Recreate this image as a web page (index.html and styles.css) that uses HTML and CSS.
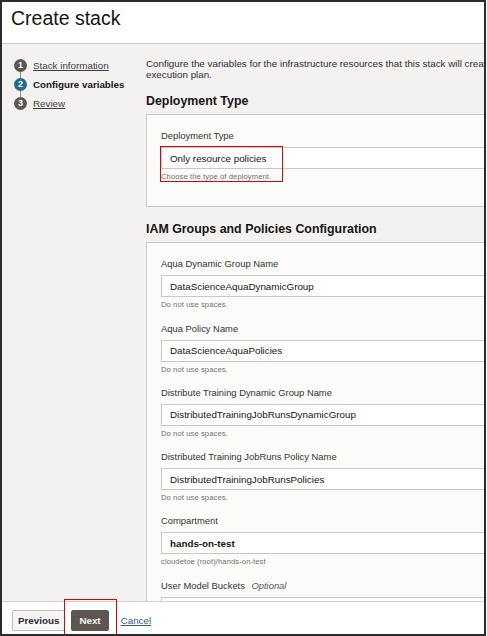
FILE: index.html
```html
<html>

<head>
  <link rel="stylesheet" href="styles.css">
</head>

<body>

  <div class="frame">
    <header class="header">
      <h1 class="title">Create stack</h1>
    </header>

    <div class="content">
      <nav class="steps">
        <ol class="step-list">
          <li class="step"><span class="step-num">1</span><a class="step-link" href="#">Stack information</a></li>
          <li class="step step-current"><span class="step-num">2</span><span class="step-label">Configure variables</span></li>
          <li class="step"><span class="step-num">3</span><a class="step-link" href="#">Review</a></li>
        </ol>
      </nav>

      <main class="main">
        <p class="intro">Configure the variables for the infrastructure resources that this stack will create when you run the apply job for this<br>execution plan.</p>

        <h2 class="section-title">Deployment Type</h2>
        <div class="panel">
          <div class="field">
            <label class="field-label">Deployment Type</label>
            <div class="field-body">
              <input class="input" value="Only resource policies" readonly>
              <p class="help">Choose the type of deployment.</p>
              <span class="highlight highlight-select"></span>
            </div>
          </div>
        </div>

        <h2 class="section-title section-title-second">IAM Groups and Policies Configuration</h2>
        <div class="panel">
          <div class="field">
            <label class="field-label">Aqua Dynamic Group Name</label>
            <input class="input" value="DataScienceAquaDynamicGroup" readonly>
            <p class="help">Do not use spaces.</p>
          </div>
          <div class="field">
            <label class="field-label">Aqua Policy Name</label>
            <input class="input" value="DataScienceAquaPolicies" readonly>
            <p class="help">Do not use spaces.</p>
          </div>
          <div class="field">
            <label class="field-label">Distribute Training Dynamic Group Name</label>
            <input class="input" value="DistributedTrainingJobRunsDynamicGroup" readonly>
            <p class="help">Do not use spaces.</p>
          </div>
          <div class="field">
            <label class="field-label">Distributed Training JobRuns Policy Name</label>
            <input class="input" value="DistributedTrainingJobRunsPolicies" readonly>
            <p class="help">Do not use spaces.</p>
          </div>
          <div class="field">
            <label class="field-label">Compartment</label>
            <input class="input input-bold" value="hands-on-test" readonly>
            <p class="help">cloudetoe (root)/hands-on-test</p>
          </div>
          <div class="field">
            <label class="field-label">User Model Buckets <i class="optional">Optional</i></label>
            <input class="input" value="" readonly>
            <p class="help">&nbsp;</p>
          </div>
        </div>
      </main>
    </div>

    <footer class="footer">
      <button class="btn btn-secondary">Previous</button>
      <button class="btn btn-primary">Next</button>
      <a class="cancel" href="#">Cancel</a>
      <span class="highlight highlight-next"></span>
    </footer>
  </div>

</body>

</html>
```

FILE: styles.css
```css
body {
  margin: 0;
  font-family: "Liberation Sans", Arial, sans-serif;
  color: #161513;
  background-color: #fff;
}

.frame {
  width: 486px;
  height: 636px;
  box-sizing: border-box;
  border: 2px solid #2b2b2b;
  display: flex;
  flex-direction: column;
  overflow: hidden;
}

/* header */
.header {
  flex: 0 0 auto;
  height: 36px;
  background-color: #fff;
  border-bottom: 1px solid #c9c9c9;
  padding: 5px 9px 0;
}

.title {
  margin: 0;
  font-size: 19.5px;
  line-height: 22px;
  font-weight: normal;
  color: #161513;
}

.content {
  flex: 1 1 auto;
  display: flex;
  background-color: #f3f2f1;
  overflow: hidden;
}

/* steps */
.steps {
  flex: 0 0 144px;
  padding: 11.5px 0 0 12px;
  box-sizing: border-box;
}

.step-list {
  list-style: none;
  margin: 0;
  padding: 0;
  position: relative;
}

.step-list::before {
  content: "";
  position: absolute;
  left: 6px;
  top: 9px;
  bottom: 9px;
  width: 1px;
  background-color: #8c8884;
}

.step {
  display: flex;
  align-items: center;
  height: 19px;
  font-size: 9.8px;
}

.step-num {
  position: relative;
  width: 13px;
  height: 13px;
  border-radius: 50%;
  background-color: #5b5651;
  color: #fff;
  font-size: 9px;
  font-weight: bold;
  line-height: 13px;
  text-align: center;
  margin-right: 6px;
}

.step-current .step-num {
  background-color: #236a8d;
}

.step-link {
  color: #3d3d3d;
  text-decoration: underline;
}

.step-label {
  font-weight: bold;
  color: #161513;
}

/* main column */
.main {
  flex: 0 0 600px;
  padding-top: 14px;
}

.intro {
  margin: 0;
  font-size: 9.8px;
  line-height: 11px;
  color: #2e2e2e;
}

.section-title {
  margin: 14px 0 5px;
  font-size: 12.4px;
  line-height: 15px;
  font-weight: bold;
  color: #161513;
}

.section-title-second {
  margin-top: 15px;
}

.panel {
  background-color: #fbfbfa;
  border: 1px solid #c9c9c9;
  padding: 15px 0 12px 14px;
}

.field {
  margin-bottom: 13.3px;
}

.field-body {
  position: relative;
}

.field-label {
  display: block;
  font-size: 9.4px;
  line-height: 11px;
  margin-bottom: 6px;
  color: #333;
}

.optional {
  color: #555;
  margin-left: 4px;
}

.input {
  display: block;
  width: 100%;
  height: 22px;
  box-sizing: border-box;
  border: 1px solid #c8c8c8;
  background-color: #fff;
  padding: 0 8px;
  font-family: inherit;
  font-size: 9.8px;
  color: #161513;
  outline: none;
}

.input-bold {
  font-weight: bold;
}

.help {
  margin: 3px 0 0;
  font-size: 7.6px;
  line-height: 9px;
  letter-spacing: 0.1px;
  color: #707070;
}

/* footer */
.footer {
  flex: 0 0 auto;
  height: 21px;
  position: relative;
  display: flex;
  align-items: center;
  background-color: #fff;
  border-top: 1px solid #d2d2d2;
  padding: 8px 10px 3px;
}

.btn {
  height: 21px;
  border-radius: 2px;
  font-family: inherit;
  font-size: 9.8px;
  font-weight: bold;
  cursor: pointer;
}

.btn-secondary {
  padding: 0 5px;
  background-color: #f6f5f3;
  border: 1px solid #bdbdbd;
  color: #2c2c2c;
  margin-right: 6px;
}

.btn-primary {
  padding: 0 7px;
  background-color: #5c5550;
  border: 1px solid #5c5550;
  color: #f5f5f5;
  margin-right: 12px;
}

.cancel {
  font-size: 9.8px;
  color: #2f5e8e;
  text-decoration: underline;
}

/* red callouts */
.highlight {
  position: absolute;
  border: 1.5px solid #e30000;
  pointer-events: none;
}

.highlight-select {
  left: -1px;
  top: -1px;
  width: 121px;
  height: 34px;
}

.highlight-next {
  left: 62px;
  top: -3px;
  width: 51px;
  height: 44px;
}
```
